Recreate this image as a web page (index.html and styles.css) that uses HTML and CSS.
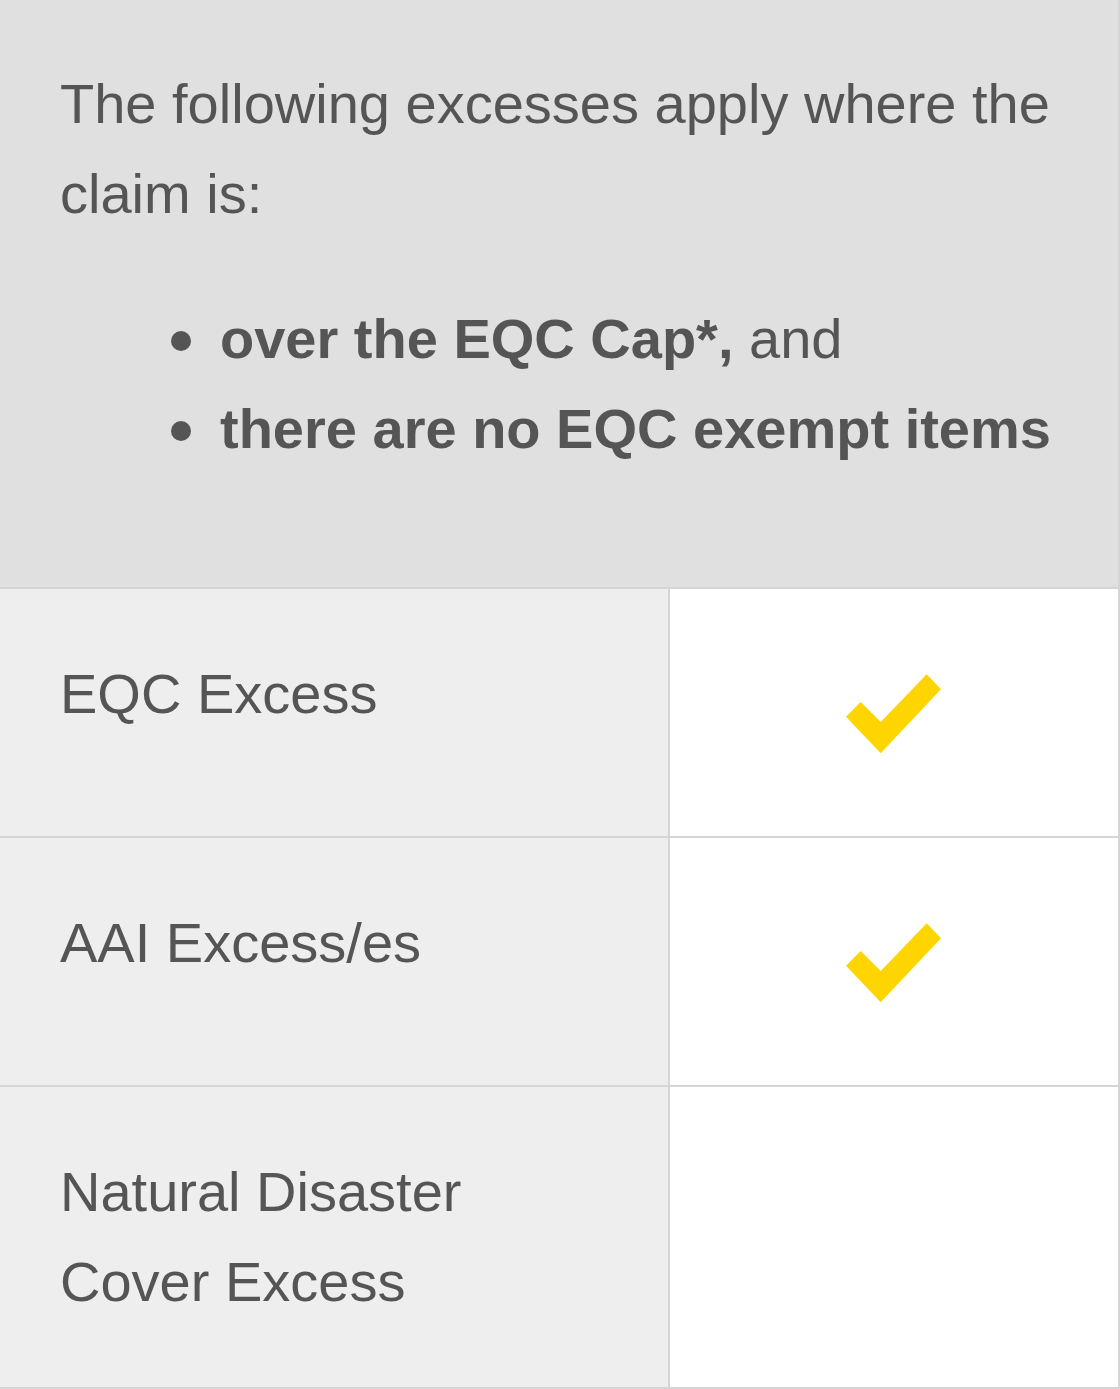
FILE: index.html
```html
<!DOCTYPE html>
<html lang="en">
<head>
<meta charset="utf-8">
<title>Excesses</title>
<link rel="stylesheet" href="styles.css">
</head>
<body>
<div class="excess-table">
  <div class="head-cell">
    <p class="intro">The following excesses apply where the claim is:</p>
    <ul class="conditions">
      <li><strong>over the EQC Cap*,</strong> and</li>
      <li><strong>there are no EQC exempt items</strong></li>
    </ul>
  </div>
  <div class="row">
    <div class="label-cell">EQC Excess</div>
    <div class="value-cell">
      <svg class="check" width="96" height="127" viewBox="0 0 96 127" aria-hidden="true"><polygon points="0,67.7 14.7,53 34.7,73 80.7,25.3 95,40.3 34.7,104.3" fill="#ffd500"/></svg>
    </div>
  </div>
  <div class="row">
    <div class="label-cell">AAI Excess/es</div>
    <div class="value-cell">
      <svg class="check" width="96" height="127" viewBox="0 0 96 127" aria-hidden="true"><polygon points="0,67.7 14.7,53 34.7,73 80.7,25.3 95,40.3 34.7,104.3" fill="#ffd500"/></svg>
    </div>
  </div>
  <div class="row">
    <div class="label-cell">Natural Disaster<br>Cover Excess</div>
    <div class="value-cell"></div>
  </div>
</div>
</body>
</html>
```
FILE: styles.css
```css
html, body {
  margin: 0;
  padding: 0;
  background: #ffffff;
}

body {
  font-family: "Liberation Sans", Arial, sans-serif;
  font-size: 56px;
  line-height: 1.6;
  color: #555555;
}

.excess-table {
  width: 1120px;
  display: flex;
  flex-direction: column;
}

.head-cell {
  background: #e0e0e0;
  padding: 59px 60px 58px 60px;
  border-right: 2px solid #d5d5d5;
  border-bottom: 2px solid #d5d5d5;
}

.intro {
  margin: 0 0 56px 0;
}

.conditions {
  margin: 0 0 56px 0;
  padding: 0 0 0 160px;
  list-style: none;
}

.conditions li::before {
  content: "";
  display: inline-block;
  width: 20px;
  height: 20px;
  border-radius: 50%;
  background: #555555;
  margin-left: -49px;
  margin-right: 29px;
  vertical-align: 7px;
}

.conditions strong {
  font-weight: bold;
}

.row {
  display: grid;
  grid-template-columns: 670px 450px;
}

.label-cell {
  background: #eeeeee;
  padding: 60px;
  border-right: 2px solid #d5d5d5;
  border-bottom: 2px solid #d5d5d5;
}

.value-cell {
  background: #ffffff;
  padding: 60px 0;
  border-right: 2px solid #d5d5d5;
  border-bottom: 2px solid #d5d5d5;
  display: flex;
  justify-content: center;
  align-items: center;
}

.check {
  display: block;
}
```
